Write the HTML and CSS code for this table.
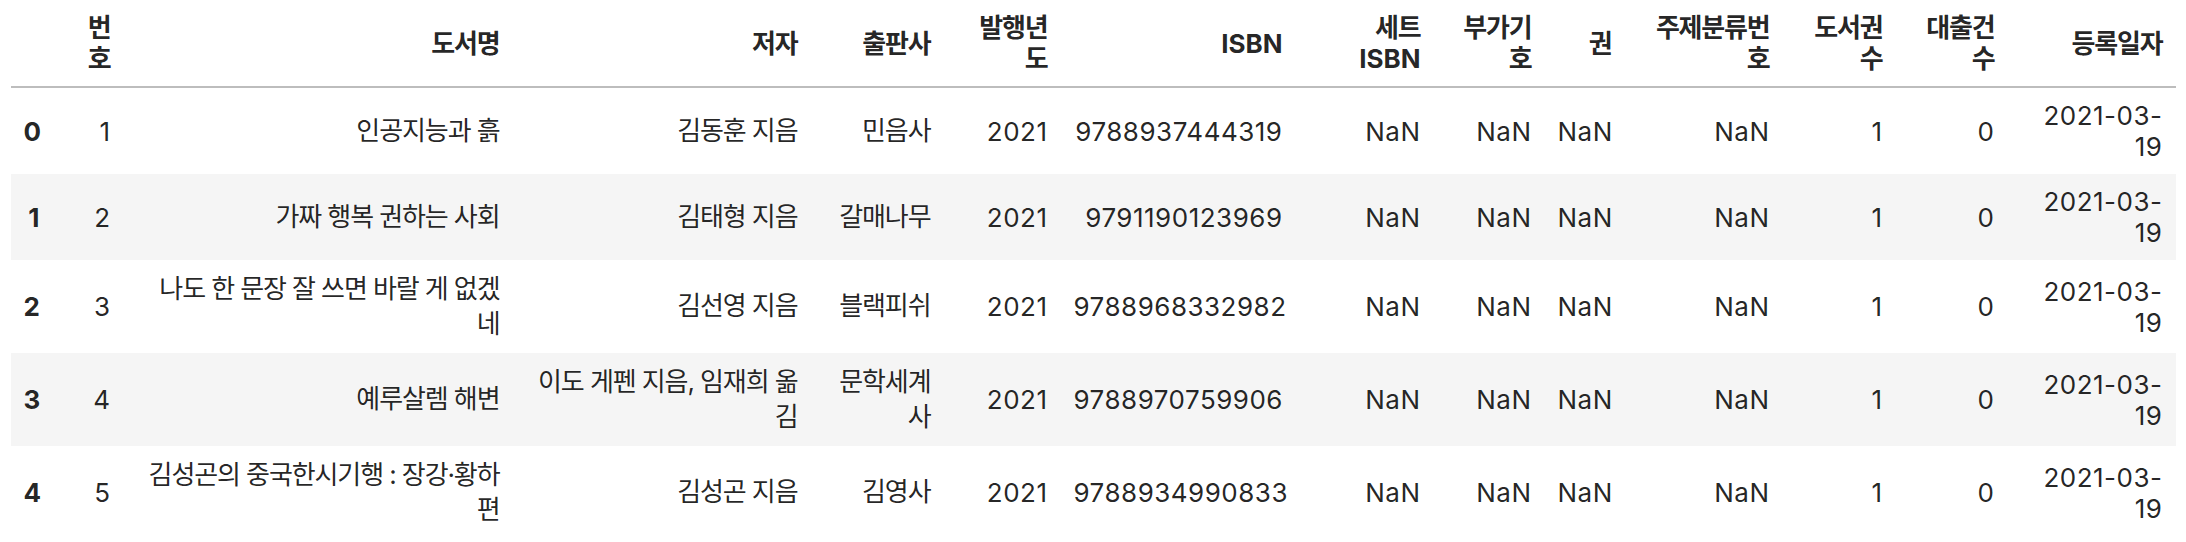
FILE: index.html
```html
<!DOCTYPE html>
<html lang="ko">
<head>
<meta charset="utf-8">
<link rel="stylesheet" href="styles.css">
</head>
<body>
<table class="df">
  <colgroup>
    <col class="c-idx"><col class="c-no"><col class="c-title"><col class="c-author"><col class="c-pub"><col class="c-year"><col class="c-isbn"><col class="c-set"><col class="c-add"><col class="c-vol"><col class="c-subj"><col class="c-cnt"><col class="c-loan"><col class="c-date">
  </colgroup>
  <thead>
    <tr>
      <th></th><th>번<br>호</th><th>도서명</th><th>저자</th><th>출판사</th><th>발행년<br>도</th><th class="latin">ISBN</th><th>세트<br><span class="latin">ISBN</span></th><th>부가기<br>호</th><th>권</th><th>주제분류번<br>호</th><th>도서권<br>수</th><th>대출건<br>수</th><th>등록일자</th>
    </tr>
  </thead>
  <tbody>
    <tr>
      <th>0</th><td>1</td><td class="ko">인공지능과 흙</td><td class="ko">김동훈 지음</td><td class="ko">민음사</td><td>2021</td><td>9788937444319</td><td>NaN</td><td>NaN</td><td>NaN</td><td>NaN</td><td>1</td><td>0</td><td>2021-03-<br>19</td>
    </tr>
    <tr>
      <th>1</th><td>2</td><td class="ko">가짜 행복 권하는 사회</td><td class="ko">김태형 지음</td><td class="ko">갈매나무</td><td>2021</td><td>9791190123969</td><td>NaN</td><td>NaN</td><td>NaN</td><td>NaN</td><td>1</td><td>0</td><td>2021-03-<br>19</td>
    </tr>
    <tr>
      <th>2</th><td>3</td><td class="ko">나도 한 문장 잘 쓰면 바랄 게 없겠<br>네</td><td class="ko">김선영 지음</td><td class="ko">블랙피쉬</td><td>2021</td><td>9788968332982</td><td>NaN</td><td>NaN</td><td>NaN</td><td>NaN</td><td>1</td><td>0</td><td>2021-03-<br>19</td>
    </tr>
    <tr>
      <th>3</th><td>4</td><td class="ko">예루살렘 해변</td><td class="ko">이도 게펜 지음, 임재희 옮<br>김</td><td class="ko">문학세계<br>사</td><td>2021</td><td>9788970759906</td><td>NaN</td><td>NaN</td><td>NaN</td><td>NaN</td><td>1</td><td>0</td><td>2021-03-<br>19</td>
    </tr>
    <tr>
      <th>4</th><td>5</td><td class="ko">김성곤의 중국한시기행 : 장강·황하<br>편</td><td class="ko">김성곤 지음</td><td class="ko">김영사</td><td>2021</td><td>9788934990833</td><td>NaN</td><td>NaN</td><td>NaN</td><td>NaN</td><td>1</td><td>0</td><td>2021-03-<br>19</td>
    </tr>
  </tbody>
</table>
</body>
</html>
```
FILE: styles.css
```css
html, body {
  margin: 0;
  padding: 0;
  background: #ffffff;
}

.df {
  width: 2165px;
  margin: 0 auto;
  table-layout: fixed;
  border-collapse: collapse;
  border-spacing: 0;
  font-family: Inter, "Noto Sans CJK KR", sans-serif;
  font-size: 26px;
  line-height: 31px;
  color: rgba(0, 0, 0, 0.87);
}

.df th,
.df td {
  text-align: right;
  vertical-align: middle;
  padding: 12px 13px;
  border: none;
  white-space: nowrap;
}

.df th {
  font-weight: 700;
}

.df thead th {
  padding-top: 12px;
  padding-bottom: 12px;
  letter-spacing: -1.2px;
}

.df thead .latin {
  letter-spacing: 0;
}

.df thead {
  border-bottom: 2px solid #bdbdbd;
}

.df tbody td {
  letter-spacing: 0.5px;
}

.df tbody td.ko {
  letter-spacing: -1.1px;
  line-height: 34.5px;
}

.df tbody tr:nth-child(even) {
  background: #f5f5f5;
}

.c-idx { width: 42px; }
.c-no { width: 71px; }
.c-title { width: 389px; }
.c-author { width: 298px; }
.c-pub { width: 133px; }
.c-year { width: 117px; }
.c-isbn { width: 235px; }
.c-set { width: 138px; }
.c-add { width: 111px; }
.c-vol { width: 80px; }
.c-subj { width: 158px; }
.c-cnt { width: 113px; }
.c-loan { width: 112px; }
.c-date { width: 168px; }
```
